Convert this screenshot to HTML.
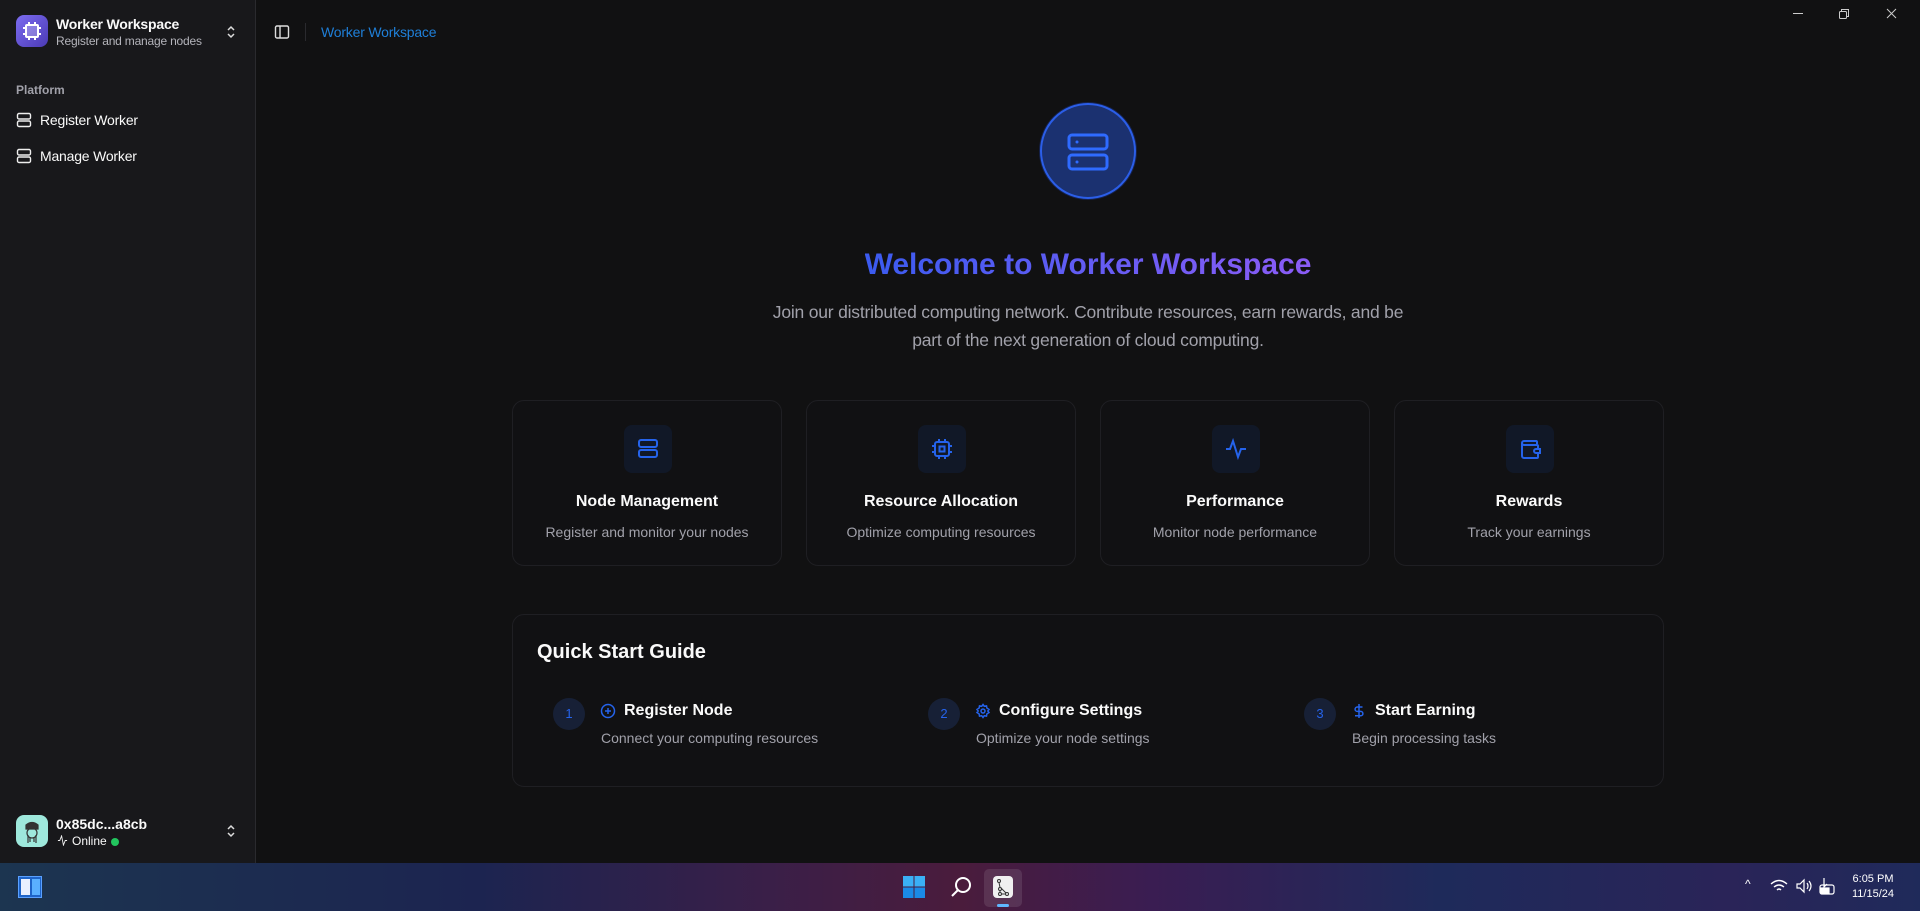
<!DOCTYPE html>
<html><head><meta charset="utf-8"><style>
*{box-sizing:border-box;margin:0;padding:0}
body{width:1920px;height:911px;overflow:hidden;background:#111112;font-family:"Liberation Sans",sans-serif;color:#fafafa;position:relative}
.side{position:absolute;left:0;top:0;width:256px;height:863px;background:#18181b;border-right:1px solid #2a2a2e}
.main{position:absolute;left:256px;top:0;width:1664px;height:863px;background:#111112}
.abs{position:absolute}
svg{display:block}
.card{position:absolute;top:400px;width:270px;height:166px;border:1px solid #1f1f23;border-radius:12px;background:#111113;text-align:center}
.ib{position:absolute;left:111px;top:24px;width:48px;height:48px;border-radius:8px;background:#111827}
.ib svg{margin:12px}
.ct{position:absolute;left:0;right:0;top:92px;font-size:16px;font-weight:bold;color:#fafafa}
.cd{position:absolute;left:0;right:0;top:123px;font-size:14px;color:#a1a1aa}
.step{position:absolute;top:698px}
.num{position:absolute;left:0;top:0;width:32px;height:32px;border-radius:50%;background:#172036;color:#2563eb;font-size:13px;text-align:center;line-height:32px}
.st{position:absolute;left:47px;top:4px;font-size:16px;font-weight:bold;white-space:nowrap;display:flex;align-items:center;gap:8px}
.sd{position:absolute;left:48px;top:32px;font-size:14px;color:#a1a1aa;white-space:nowrap}
.task{position:absolute;left:0;top:863px;width:1920px;height:48px;background:linear-gradient(90deg,#1c3550 0%,#1c2450 25%,#3a1f48 40%,#4a1c3c 50%,#3a1d52 60%,#1e2a5a 75%,#2a2458 90%,#1f2a5a 100%)}
</style></head><body>
<div class="side">
  <div class="abs" style="left:16px;top:15px;width:32px;height:32px;border-radius:8px;background:linear-gradient(135deg,#7c6cf0,#4b3ab5)">
    <svg width="32" height="32" viewBox="0 0 32 32" fill="none" stroke="#fff" stroke-width="2"><rect x="10" y="10" width="12" height="12" rx="1" fill="#fff" fill-opacity=".25"/><path d="M13 7v3M19 7v3M13 22v3M19 22v3M7 13h3M7 19h3M22 13h3M22 19h3"/></svg>
  </div>
  <div class="abs" style="left:56px;top:16px;font-size:14px;font-weight:bold;letter-spacing:-.2px">Worker Workspace</div>
  <div class="abs" style="left:56px;top:34px;font-size:12px;color:#b4b4bb;letter-spacing:-.2px">Register and manage nodes</div>
  <svg class="abs" style="left:223px;top:24px" width="16" height="16" viewBox="0 0 16 16" fill="none" stroke="#ddd" stroke-width="1.5"><path d="M5 6l3-3 3 3M5 10l3 3 3-3"/></svg>
  <div class="abs" style="left:16px;top:83px;font-size:12px;font-weight:bold;color:#a1a1aa">Platform</div>
  <svg class="abs" style="left:16px;top:112px" width="16" height="16" viewBox="0 0 16 16" fill="none" stroke="#eee" stroke-width="1.4"><rect x="1.5" y="1.5" width="13" height="5.5" rx="1.5"/><rect x="1.5" y="9" width="13" height="5.5" rx="1.5"/></svg>
  <div class="abs" style="left:40px;top:112px;font-size:14px;letter-spacing:-.2px">Register Worker</div>
  <svg class="abs" style="left:16px;top:148px" width="16" height="16" viewBox="0 0 16 16" fill="none" stroke="#eee" stroke-width="1.4"><rect x="1.5" y="1.5" width="13" height="5.5" rx="1.5"/><rect x="1.5" y="9" width="13" height="5.5" rx="1.5"/></svg>
  <div class="abs" style="left:40px;top:148px;font-size:14px;letter-spacing:-.2px">Manage Worker</div>
  <div class="abs" style="left:16px;top:815px;width:32px;height:32px;border-radius:8px;background:#9ee8dc">
    <svg width="32" height="32" viewBox="0 0 32 32" fill="none" stroke="#333" stroke-width="1.2"><path d="M10 10q6-5 12 0v4H10z" fill="#333"/><circle cx="16" cy="18" r="5"/><path d="M12 20v8M20 20v8M14 22v5M18 22v5"/></svg>
  </div>
  <div class="abs" style="left:56px;top:816px;font-size:14px;font-weight:bold">0x85dc...a8cb</div>
  <svg class="abs" style="left:57px;top:835px" width="11" height="11" viewBox="0 0 12 12" fill="none" stroke="#eee" stroke-width="1"><path d="M1 6h2l2-5 2 10 2-5h2"/></svg>
  <div class="abs" style="left:72px;top:834px;font-size:12px">Online</div>
  <div class="abs" style="left:111px;top:838px;width:8px;height:8px;border-radius:50%;background:#22c55e"></div>
  <svg class="abs" style="left:223px;top:823px" width="16" height="16" viewBox="0 0 16 16" fill="none" stroke="#ddd" stroke-width="1.5"><path d="M5 6l3-3 3 3M5 10l3 3 3-3"/></svg>
</div>
<div class="main">
  <svg class="abs" style="left:18px;top:24px" width="16" height="16" viewBox="0 0 16 16" fill="none" stroke="#ddd" stroke-width="1.4"><rect x="1.5" y="2" width="13" height="12" rx="1.5"/><path d="M6 2v12"/></svg>
  <div class="abs" style="left:49px;top:23px;width:1px;height:18px;background:#2a2a2e"></div>
  <div class="abs" style="left:65px;top:24px;font-size:14px;color:#1f7fd8;letter-spacing:-.2px">Worker Workspace</div>
  <div class="abs" style="left:1537px;top:13px;width:10px;height:1px;background:#ccc"></div>
  <svg class="abs" style="left:1582px;top:8px" width="12" height="12" viewBox="0 0 12 12" fill="none" stroke="#ccc"><rect x="1.5" y="3.5" width="7" height="7" rx="1"/><path d="M3.5 3.5V1.5h7v7h-2"/></svg>
  <svg class="abs" style="left:1630px;top:8px" width="11" height="11" viewBox="0 0 11 11" stroke="#ccc"><path d="M1 1l9 9M10 1l-9 9"/></svg>

  <div class="abs" style="left:784px;top:103px;width:96px;height:96px;border-radius:50%;background:#1b3170;border:2px solid #2b5ee8;box-shadow:0 0 0 1px #15224d">
    <svg style="margin:22px" width="48" height="48" viewBox="0 0 48 48" fill="none" stroke="#2f6bff" stroke-width="3"><rect x="5" y="8" width="38" height="14" rx="3"/><rect x="5" y="28" width="38" height="14" rx="3"/><circle cx="13" cy="15" r="1.5" fill="#2f6bff" stroke="none"/><circle cx="13" cy="35" r="1.5" fill="#2f6bff" stroke="none"/></svg>
  </div>
  <div class="abs" style="left:0;width:1664px;top:248px;text-align:center;font-size:30px;font-weight:bold"><span style="background:linear-gradient(90deg,#3b5bf0,#8b5cf6);-webkit-background-clip:text;background-clip:text;color:transparent">Welcome to Worker Workspace</span></div>
  <div class="abs" style="left:482px;width:700px;top:298px;text-align:center;font-size:17.5px;line-height:28px;color:#a1a1aa;letter-spacing:-.2px">Join our distributed computing network. Contribute resources, earn rewards, and be<br>part of the next generation of cloud computing.</div>

  <div class="card" style="left:256px"><div class="ib"><svg width="24" height="24" viewBox="0 0 24 24" fill="none" stroke="#2563eb" stroke-width="2"><rect x="3" y="3" width="18" height="7" rx="2"/><rect x="3" y="13" width="18" height="7" rx="2"/><path d="M6 6.5h.01M6 16.5h.01"/></svg></div><div class="ct">Node Management</div><div class="cd">Register and monitor your nodes</div></div>
  <div class="card" style="left:550px"><div class="ib"><svg width="24" height="24" viewBox="0 0 24 24" fill="none" stroke="#2563eb" stroke-width="2"><rect x="5" y="5" width="14" height="14" rx="2"/><rect x="9.5" y="9.5" width="5" height="5"/><path d="M9 2v3M15 2v3M9 19v3M15 19v3M2 9h3M2 15h3M19 9h3M19 15h3"/></svg></div><div class="ct">Resource Allocation</div><div class="cd">Optimize computing resources</div></div>
  <div class="card" style="left:844px"><div class="ib"><svg width="24" height="24" viewBox="0 0 24 24" fill="none" stroke="#2563eb" stroke-width="2"><path d="M2 12h4l3-8 5 16 3-8h5"/></svg></div><div class="ct">Performance</div><div class="cd">Monitor node performance</div></div>
  <div class="card" style="left:1138px"><div class="ib"><svg width="24" height="24" viewBox="0 0 24 24" fill="none" stroke="#2563eb" stroke-width="2"><path d="M19 7V5a1 1 0 0 0-1-1H6a2 2 0 0 0 0 4h13a1 1 0 0 1 1 1v4M20 17v3a1 1 0 0 1-1 1H6a2 2 0 0 1-2-2V6"/><path d="M22 12h-4a2 2 0 0 0 0 4h4z"/></svg></div><div class="ct">Rewards</div><div class="cd">Track your earnings</div></div>

  <div class="abs" style="left:256px;top:614px;width:1152px;height:173px;border:1px solid #1f1f23;border-radius:12px;background:#111113"></div>
  <div class="abs" style="left:281px;top:641px;font-size:20px;font-weight:bold">Quick Start Guide</div>
  <div class="step" style="left:297px"><div class="num">1</div><div class="st"><svg width="16" height="16" viewBox="0 0 16 16" fill="none" stroke="#2563eb" stroke-width="1.5"><circle cx="8" cy="8" r="6.5"/><path d="M8 5v6M5 8h6"/></svg>Register Node</div><div class="sd">Connect your computing resources</div></div>
  <div class="step" style="left:672px"><div class="num">2</div><div class="st"><svg width="16" height="16" viewBox="0 0 16 16" fill="none" stroke="#2563eb" stroke-width="1.5"><circle cx="8" cy="8" r="2"/><path d="M8 1.5l1.3 1.8 2.2-.4.4 2.2L14 6.4 12.8 8l1.2 1.6-2.1 1.3-.4 2.2-2.2-.4L8 14.5l-1.3-1.8-2.2.4-.4-2.2L2 9.6 3.2 8 2 6.4l2.1-1.3.4-2.2 2.2.4z"/></svg>Configure Settings</div><div class="sd">Optimize your node settings</div></div>
  <div class="step" style="left:1048px"><div class="num">3</div><div class="st"><svg width="16" height="16" viewBox="0 0 16 16" fill="none" stroke="#2563eb" stroke-width="1.5"><path d="M8 1v14M11.5 4H6.3a2.2 2.2 0 0 0 0 4.4h3.4a2.2 2.2 0 0 1 0 4.4H4"/></svg>Start Earning</div><div class="sd">Begin processing tasks</div></div>
</div>
<div class="task">
  <div class="abs" style="left:18px;top:13px;width:24px;height:22px;background:#1e64c8;border:1px solid #5aa0ff"><div style="position:absolute;left:2px;top:2px;width:9px;height:16px;background:#e8f0ff"></div><div style="position:absolute;left:13px;top:2px;width:8px;height:16px;background:#5ab0ff"></div></div>
  <svg class="abs" style="left:902px;top:12px" width="24" height="24" viewBox="0 0 24 24"><rect x="1" y="1" width="10.5" height="10.5" fill="#3ab0f5"/><rect x="12.5" y="1" width="10.5" height="10.5" fill="#3ab0f5"/><rect x="1" y="12.5" width="10.5" height="10.5" fill="#1a8ae6"/><rect x="12.5" y="12.5" width="10.5" height="10.5" fill="#1a8ae6"/></svg>
  <svg class="abs" style="left:949px;top:12px" width="24" height="24" viewBox="0 0 24 24" fill="none" stroke="#fff" stroke-width="2"><circle cx="14" cy="10" r="7"/><path d="M9 15l-6 6"/></svg>
  <div class="abs" style="left:984px;top:6px;width:38px;height:38px;border-radius:5px;background:rgba(255,255,255,.1)"></div>
  <div class="abs" style="left:993px;top:13px;width:20px;height:22px;border-radius:4px;background:#f0f0f0"><svg width="20" height="22" viewBox="0 0 20 22" fill="none" stroke="#333" stroke-width="1"><circle cx="6" cy="5" r="1.5"/><circle cx="7" cy="13" r="1.5"/><circle cx="7" cy="18" r="1.5"/><circle cx="14" cy="18" r="1.5"/><path d="M6 6.5l1 5M7 14.5v2M8.5 18h4M8 12l5 5"/></svg></div>
  <div class="abs" style="left:997px;top:41px;width:12px;height:3px;border-radius:2px;background:#5fb8ff"></div>
  <div class="abs" style="left:1745px;top:14px;font-size:12px;color:#fff">^</div>
  <svg class="abs" style="left:1770px;top:16px" width="18" height="14" viewBox="0 0 18 14" fill="none" stroke="#fff" stroke-width="1.4"><path d="M1 5q8-7 16 0M4 8q5-4 10 0M7 11q2-2 4 0"/></svg>
  <svg class="abs" style="left:1795px;top:15px" width="18" height="16" viewBox="0 0 18 16" fill="none" stroke="#fff" stroke-width="1.2"><path d="M2 6h3l4-4v12l-4-4H2zM12 5q2 3 0 6M14 3q4 5 0 10"/></svg>
  <svg class="abs" style="left:1818px;top:13px" width="18" height="20" viewBox="0 0 18 20" fill="none" stroke="#fff" stroke-width="1.2"><rect x="2" y="9" width="14" height="9" rx="2"/><path d="M6 2v9l3-3" /><rect x="3" y="12" width="8" height="5" fill="#fff"/></svg>
  <div class="abs" style="left:1852px;top:9px;font-size:11px;color:#fff;text-align:center;line-height:15px">6:05 PM<br>11/15/24</div>
</div>
</body></html>
